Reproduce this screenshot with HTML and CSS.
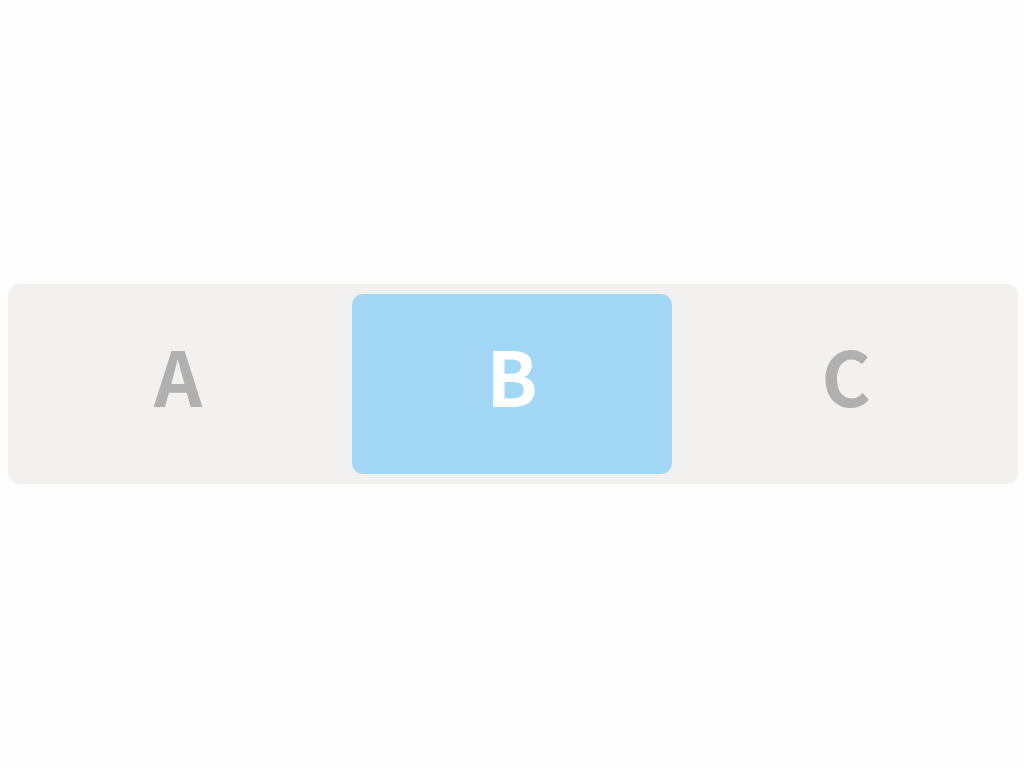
FILE: index.html
```html
<!DOCTYPE html>
<html>
<head>
<meta charset="utf-8">
<link rel="stylesheet" href="styles.css">
</head>
<body>
<div class="page">
  <div class="segmented">
    <div class="seg">A</div>
    <div class="seg active">B</div>
    <div class="seg">C</div>
  </div>
</div>
</body>
</html>
```
FILE: styles.css
```css
html, body {
  margin: 0;
  padding: 0;
  background: #fdfdfd;
}
.page {
  height: 768px;
  display: flex;
  align-items: center;
  padding-left: 8px;
}
.segmented {
  width: 1010px;
  height: 200px;
  box-sizing: border-box;
  padding: 10px;
  background: #f2f1f0;
  border-radius: 12px;
  display: grid;
  grid-template-columns: 320px 320px 320px;
  column-gap: 14px;
}
.seg {
  display: flex;
  align-items: center;
  justify-content: center;
  box-sizing: border-box;
  padding-bottom: 20px;
  border-radius: 11px;
  font-family: "Noto Sans CJK JP", "Noto Sans", sans-serif;
  font-weight: 700;
  font-size: 75px;
  color: #b0b0b0;
}
.seg.active {
  background: #a2d8f6;
  color: #ffffff;
}
```
